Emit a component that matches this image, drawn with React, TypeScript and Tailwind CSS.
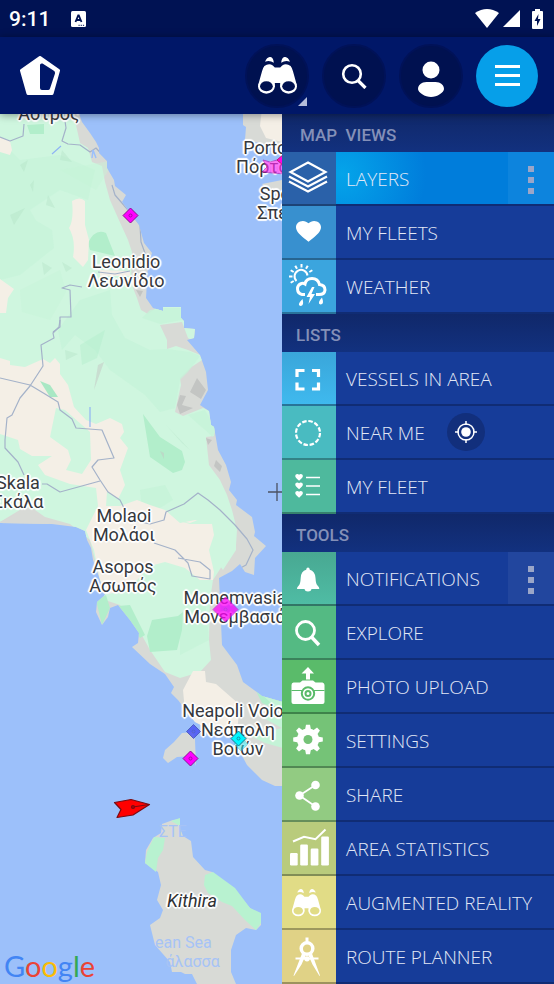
import React from "react";

const HEART =
  "M12 21.35l-1.45-1.32C5.4 15.36 2 12.28 2 8.5 2 5.42 4.42 3 7.5 3c1.74 0 3.41.81 4.5 2.09C13.09 3.81 14.76 3 16.5 3 19.58 3 22 5.42 22 8.5c0 3.78-3.4 6.86-8.55 11.54L12 21.35z";

function Binoculars({ hole }: { hole: string }) {
  return (
    <g fill="#fff">
      <path d="M21 14Q27 -1 37 0Q46 2 47 17Q35 9 21 14ZM95 14Q89 -1 79 0Q70 2 69 17Q81 9 95 14Z" />
      <path d="M19 27Q32 17 44 25L50 31H66L72 25Q84 17 97 27Q101 32 104 42L115 82L112 90H66V77H50V90H3L1 82L12 42Q15 32 19 27Z" />
      <ellipse cx="25" cy="88" rx="25" ry="21" />
      <ellipse cx="91" cy="88" rx="25" ry="21" />
      <ellipse cx="25" cy="87" rx="19" ry="15" fill={hole} />
      <ellipse cx="91" cy="87" rx="19" ry="15" fill={hole} />
    </g>
  );
}

const gearTeeth = [0, 45, 90, 135, 180, 225, 270, 315];
const sunRays = [150, 180, 210, 240, 270, 300, 330];

const glyphs: Record<string, React.ReactNode> = {
  layers: (
    <g fill="none" stroke="#fff" strokeWidth="2.2">
      <path d="M26 10.500L43.500 20L26 29.500L8.500 20Z" />
      <path d="M7 24.500L26 34.500L45 24.500" />
      <path d="M7 29.500L26 39.500L45 29.500" />
    </g>
  ),
  heart: <path d={HEART} fill="#fff" transform="translate(11.500 11.500) scale(1.25 1.14)" />,
  weather: (
    <g fill="none" stroke="#fff" strokeWidth="2">
      <path d="M14.500 21A6.500 6.500 0 1 1 25.500 15.500" />
      {sunRays.map((a) => (
        <path key={a} d="M28.500 16.500H32" transform={`rotate(${a} 19.500 16.500)`} />
      ))}
      <path
        strokeWidth="3"
        d="M23 34.500H20A5.700 5.700 0 0 1 19.500 23.500Q21.500 23 23 24Q24 18.500 30 18.500Q36 18.500 37.500 24.500Q43 25 43 30Q42.500 34.500 37 34.500H34"
      />
      <path
        fill="#fff"
        stroke="none"
        d="M30 27L24.500 37H28L26.500 44L33 34H29.500L32.500 27ZM20.500 39Q22.500 46 18.500 46Q14.500 45 20.500 39ZM40 37.500Q42.500 44.500 38.500 44.500Q34.500 43.500 40 37.500Z"
      />
    </g>
  ),
  brackets: (
    <path
      d="M15 25V18.500H22.500M30 18.500H36.500V25M36.500 30.500V37H30M22.500 37H15V30.500"
      fill="none"
      stroke="#fff"
      strokeWidth="3.200"
    />
  ),
  dashed: <circle cx="26" cy="27" r="12" fill="none" stroke="#fff" strokeWidth="2.200" strokeDasharray="4.500 1.780" />,
  fleetList: (
    <g fill="#fff">
      {[13.5, 22, 30.5].map((y) => (
        <g key={y}>
          <path d={HEART} transform={`translate(12.500 ${y - 0.5}) scale(.38 .36)`} />
          <path d={`M24 ${y + 4}H38`} stroke="#fff" strokeWidth="1.500" />
        </g>
      ))}
    </g>
  ),
  bell: (
    <path
      fill="#fff"
      d="M26 15.500Q27.600 15.500 27.800 17.800Q33 19 33.500 26Q33.800 32 35.500 33.500Q37.500 35 37.300 37H29.500Q29 39.500 26 39.500T22.500 37H15Q14.800 35 16.800 33.500Q18.400 32 18.700 26Q19 19 24.200 17.800Q24.400 15.500 26 15.500Z"
    />
  ),
  search: (
    <g fill="none" stroke="#fff" strokeWidth="2.800">
      <circle cx="23.500" cy="24.500" r="9" />
      <path d="M29.500 31L37 39" strokeWidth="3.500" />
    </g>
  ),
  camera: (
    <g>
      <path
        fill="#fff"
        d="M26 7L32 13.500H28V19.500H24V13.500H19.500ZM11.500 22.500H18L20.500 20.500H31L33.500 22.500H40.500Q42.500 23 42.500 25V42Q42.500 44 40.500 44H11.500Q9.500 44 9.500 42V25Q9.500 22.500 11.500 22.500Z"
      />
      <path d="M9.500 30.500H42.500" stroke="#5abb6a" strokeWidth="1.200" />
      <circle cx="26" cy="33.500" r="6.200" fill="#fff" stroke="#5abb6a" strokeWidth="2" />
      <circle cx="26" cy="33.500" r="2.500" fill="#fff" stroke="#5abb6a" strokeWidth="2" />
    </g>
  ),
  gear: (
    <g>
      <circle cx="26" cy="25.500" r="11" fill="#fff" />
      {gearTeeth.map((a) => (
        <path key={a} d="M23 16L24 10.700H28L29 16Z" fill="#fff" transform={`rotate(${a} 26 25.500)`} />
      ))}
      <circle cx="26" cy="25.500" r="4.500" fill="#75c377" />
    </g>
  ),
  share: (
    <g fill="#fff">
      <path d="M33.500 17L17.500 27.500L33.500 38.500" fill="none" stroke="#fff" strokeWidth="1.800" />
      <circle cx="17.500" cy="27.500" r="4.300" />
      <circle cx="33.500" cy="17" r="4.300" />
      <circle cx="33.500" cy="38.500" r="4.300" />
    </g>
  ),
  stats: (
    <g fill="#fff">
      <rect x="8" y="31" width="7.700" height="12.500" rx="1.200" />
      <rect x="18.200" y="22.500" width="7.700" height="21" rx="1.200" />
      <rect x="28.700" y="26.500" width="7.700" height="17" rx="1.200" />
      <rect x="39.200" y="14.500" width="7.700" height="29" rx="1.200" />
      <path d="M11 19.500L22 14.800L33.500 17.200L43.500 7.500" fill="none" stroke="#fff" strokeWidth="2" />
    </g>
  ),
  binoculars: (
    <g transform="translate(10 13) scale(.25)">
      <Binoculars hole="#e1dc86" />
    </g>
  ),
  compass: (
    <g fill="none" stroke="#fff" transform="translate(0 -1.500)">
      <circle cx="25" cy="20" r="5.800" strokeWidth="3.500" />
      <path d="M25 9V14" strokeWidth="3" />
      <path d="M13.500 30H36.500" strokeWidth="2" />
      <path
        fill="#fff"
        stroke="none"
        d="M20 25L23.500 27L19.500 36L12 47.500L11.500 47ZM30 25L26.500 27L30.500 36L37.500 47.500L38 47ZM22 29Q25 26.500 28 29Q28 33 25 33T22 29Z"
      />
    </g>
  ),
};

type Item = { label: string; icon: string; tint: string; more?: boolean; locate?: boolean; active?: boolean };
type Section = { title: string; pad: string; items: Item[] };

const sections: Section[] = [
  {
    title: "MAP\u00a0 VIEWS",
    pad: "pl-[18px]",
    items: [
      { label: "LAYERS", icon: "layers", tint: "bg-[#2a61a9]", more: true, active: true },
      { label: "MY FLEETS", icon: "heart", tint: "bg-[#3890cf]" },
      { label: "WEATHER", icon: "weather", tint: "bg-[#3ba5de]" },
    ],
  },
  {
    title: "LISTS",
    pad: "pl-[14px]",
    items: [
      { label: "VESSELS IN AREA", icon: "brackets", tint: "bg-linear-to-b from-[#3aa6da] to-[#3fb9ee]" },
      { label: "NEAR ME", icon: "dashed", tint: "bg-[#49bbc1]", locate: true },
      { label: "MY FLEET", icon: "fleetList", tint: "bg-[#4eb99d]" },
    ],
  },
  {
    title: "TOOLS",
    pad: "pl-[14px]",
    items: [
      { label: "NOTIFICATIONS", icon: "bell", tint: "bg-linear-to-b from-[#48a892] to-[#4fbca4]", more: true },
      { label: "EXPLORE", icon: "search", tint: "bg-[#54ba83]" },
      { label: "PHOTO UPLOAD", icon: "camera", tint: "bg-[#5abb6a]" },
      { label: "SETTINGS", icon: "gear", tint: "bg-[#75c377]" },
      { label: "SHARE", icon: "share", tint: "bg-[#92cb82]" },
      { label: "AREA STATISTICS", icon: "stats", tint: "bg-[#b9cb7c]" },
      { label: "AUGMENTED REALITY", icon: "binoculars", tint: "bg-[#e1dc86]" },
      { label: "ROUTE PLANNER", icon: "compass", tint: "bg-[#e0d286]" },
    ],
  },
];

function Row({ item }: { item: Item }) {
  return (
    <li
      className={`flex h-[54px] border-b-2 border-[#102c74] ${
        item.active
          ? "bg-[#007ddb] bg-[radial-gradient(circle_at_60px_22px,#04a4ea_0,#007ddb_84px)]"
          : "bg-[#163c99]"
      }`}
    >
      <button type="button" className="flex min-w-0 items-center text-left">
        <span className={`h-[54px] w-[54px] shrink-0 self-start border-b-2 border-black/30 ${item.tint}`}>
          <svg viewBox="0 0 54 54" className="size-[54px]" aria-hidden="true">
            {glyphs[item.icon]}
          </svg>
        </span>
        <span className="pt-[2px] pl-[10px] font-['Open_Sans',sans-serif] text-[19px] leading-6 font-light whitespace-nowrap text-[#e2e8f6]">
          {item.label}
        </span>
      </button>
      {item.locate && (
        <button
          type="button"
          aria-label="Locate me"
          className="ml-[22px] flex size-[38px] items-center justify-center self-center rounded-full bg-[#122f7c]"
        >
          <svg viewBox="0 0 24 24" className="size-6" fill="none" stroke="#fff" strokeWidth="1.500" aria-hidden="true">
            <circle cx="12" cy="12" r="8" />
            <circle cx="12" cy="12" r="4.800" fill="#fff" stroke="none" />
            <path d="M12 1V5M12 19V23M1 12H5M19 12H23" />
          </svg>
        </button>
      )}
      {item.more && (
        <button
          type="button"
          aria-label={`More options for ${item.label.toLowerCase()}`}
          className="ml-auto flex w-[46px] flex-col items-center justify-center gap-[5px] bg-white/5 pt-1"
        >
          <span className="size-[6px] bg-[#9ba6c8]" />
          <span className="size-[6px] bg-[#9ba6c8]" />
          <span className="size-[6px] bg-[#9ba6c8]" />
        </button>
      )}
    </li>
  );
}

const halo =
  "[text-shadow:2px_0_1px_#fff,-2px_0_1px_#fff,0_2px_1px_#fff,0_-2px_1px_#fff,1px_1px_1px_#fff,-1px_-1px_1px_#fff,1px_-1px_1px_#fff,-1px_1px_1px_#fff]";

const places = [
  { lines: ["Άστρος"], at: "left-[49px] top-[-10px]" },
  { lines: ["Leonidio", "Λεωνίδιο"], at: "left-[126px] top-[138px]" },
  { lines: ["Porto Heli", "Πόρτο Χέλι"], at: "left-[283px] top-[24px]" },
  { lines: ["Spetses", "Σπέτσες"], at: "left-[292px] top-[70px]" },
  { lines: ["Skala", "Σκάλα"], at: "left-[18px] top-[359px]" },
  { lines: ["Molaoi", "Μολάοι"], at: "left-[124px] top-[392px]" },
  { lines: ["Asopos", "Ασωπός"], at: "left-[123px] top-[443px]" },
  { lines: ["Monemvasia", "Μονεμβασιά"], at: "left-[235px] top-[474px]" },
  { lines: ["Neapoli Voion", "Νεάπολη", "Βοιών"], at: "left-[238px] top-[587px]" },
];

function Diamond({ x, y, r, fill, stroke, o = 1 }: { x: number; y: number; r: number; fill: string; stroke: string; o?: number }) {
  return (
    <g transform={`translate(${x} ${y})`} opacity={o}>
      <path d={`M0 ${-r}L${r} 0L0 ${r}L${-r} 0Z`} fill={fill} stroke={stroke} />
      <circle r="1.500" fill="none" stroke={stroke} strokeWidth=".8" />
    </g>
  );
}

function Terrain() {
  return (
    <svg
      viewBox="0 114 282 870"
      preserveAspectRatio="xMinYMin slice"
      className="absolute inset-0 size-full"
      aria-hidden="true"
    >
      <defs>
        <clipPath id="mainland">
          <path d="M0 100H74L82 122L90 133L96 142L99 148V153L107 161V168L114 180L115 186L126 195L122 202L130 213L139 225L144 243L152 253L148 265L146 298L153 308L163 311V307H181V318L184 321V328L195 329L194 338L187 340L200 355L206 372L208 390L200 405L209 411L211 425L214 427L218 450L226 465L231 482L229 490L237 500L236 505L252 517L255 532L254 536L266 546L255 558L254 575L245 572L240 564L232 571L219 578L220 600L222 645L237 665L243 682L262 696L290 704V786L275 786L262 780L247 765L240 752L236 738L218 725L205 727L195 722L178 700L171 693L174 687L165 674L150 664L132 647L138 643L139 633L130 620L118 605L110 608L108 617L102 625L96 612L97 602L105 595L100 580L93 560L91 548L87 540L85 531L76 527L52 524L0 523Z" />
        </clipPath>
      </defs>
      <rect y="100" width="282" height="890" fill="#9cc0fa" />
      <g clipPath="url(#mainland)">
        <rect y="100" width="290" height="700" fill="#d8dad6" />
        <path
          fill="#cff6df"
          d="M0 100H65L76 125L80 143L88 148L92 162L102 166L105 182L110 200L118 218L128 240L132 252L131 283L137 298L141 310L148 314L162 304H200V345L188 338L182 322L160 325L167 340V349L176 346L188 350L200 355L202 360L190 368L180 378L181 385L175 412L183 416L203 408L216 414L214 436L206 437L209 465L220 480L227 495L232 510L237 530L236 545L222 566L213 580L210 600L209 640L211 660L200 672L180 678L165 672L150 650L139 630L120 605L105 600L90 540L70 524L45 517L28 505L0 522Z"
        />
        <path fill="#d8dad6" d="M0 522L14 515L30 513L50 524L0 526Z" />
        <g fill="#c5f4d8">
          <path d="M0 140L20 160L60 155L95 170L88 200L60 190L30 210L50 245L10 250L0 230ZM0 220H35L52 230L54 248L20 275L0 280Z" opacity=".6" />
          <path d="M110 290L112 315L125 338L150 350L167 349L190 352L200 356L188 372L180 380L175 408L160 412L145 395L110 370L95 350L75 335L62 350L58 330L80 300Z" opacity=".7" />
          <path d="M140 490L165 485L173 500L160 508H142ZM142 318L150 310L165 308H182V320L160 324Z" opacity=".8" />
          <path d="M188 415L205 410L216 430L213 437ZM180 620L205 600L209 640L180 655Z" opacity=".8" />
          <path d="M60 170L115 160L96 190ZM20 290L60 270L66 292L50 320L22 312Z" opacity=".4" />
        </g>
        <g fill="#b2eecb">
          <path d="M143 414L160 437L182 451L185 462L182 470L173 473L150 457ZM88 243Q95 228 106 233L115 256L90 250Z" />
          <path d="M152 620L178 616L183 612L182 630L177 650L150 652L147 636ZM27 125L44 124V134H30Z" />
          <path d="M96 600L106 595L110 608L102 625ZM118 606L130 605L145 635L140 638ZM254 687L282 700V712L262 703Z" />
          <path d="M80 345L105 330L97 358L82 365Z" opacity=".45" />
        </g>
        <g fill="#f4efe6">
          <path d="M72 201Q80 196 85 201L85 225L89 240L88 260L83 267L73 257Q76 240 69 228Q74 220 72 201ZM0 137L10 141L12 150L10 155L0 152ZM0 279L14 289L8 298L6 313H0ZM100 270L130 271V276H100Z" />
          <path d="M0 358L10 361V365L25 367L43 359L50 363L55 358L60 364V374L68 385L74 407L86 420L96 424L110 418L122 424L124 432L120 438L128 448L120 470L125 485L118 499L107 492L106 506L120 506L137 500L150 505L165 510L180 523L195 520L212 524L214 535L209 550L214 572L213 580H200L185 568L165 562L150 566L128 590L108 594L100 580L94 550L86 530L98 506L96 488L70 484L45 475L38 465L52 456L32 456L20 449L18 440L0 434Z" />
          <path d="M193 671H205L206 682L216 684L240 705L236 740L200 735L185 712L183 690Z" />
        </g>
        <path
          fill="#cff6df"
          d="M56 408L65 410L90 432L91 460L82 474L66 470L71 460L68 450L50 437ZM176 520L190 523L206 517L212 524L190 524ZM214 545L218 530H236V550L223 570L212 555Z"
        />
        <path fill="#a9e8c4" d="M40 381L50 385L58 397L50 397Z" />
        <path fill="#c4f3d7" d="M255 688L290 700V750L265 743L250 736L282 728L258 715L285 716Z" />
        <g fill="#c3c5c3">
          <path d="M197 378L206 390L201 399L190 392ZM180 395L186 396L182 405L193 408L180 414L177 405ZM206 438L212 440L208 445ZM216 460L222 466L220 472L214 466ZM136 290L143 291L140 297Z" />
          <path d="M98 365L104 362L94 390ZM160 451L164 453V459Z" opacity=".5" />
        </g>
        <g fill="#b0dfc4" opacity=".35">
          <path d="M10 215L25 208L14 225ZM48 195L55 208L46 205ZM42 262L52 268L44 275ZM20 165L28 160L24 172ZM62 150L72 162L60 160ZM166 425L190 450L182 443ZM62 262L72 268L66 272ZM30 185L34 180L33 192ZM65 350L78 354L66 360Z" />
        </g>
        <g fill="none" stroke="#a4b2c9" strokeWidth="1.200" strokeLinejoin="round">
          <path d="M64 114L66 128L62 141L68 144L80 145L90 152L96 148L107 160M0 137L10 141L23 136L24 124M82 287L70 285L62 288L70 290L71 317H60V327L53 332M146 256L141 242L140 225L128 210L115 195L112 185M98 272L115 274L130 271" />
          <path d="M60 320L59 327L53 333L54 338L41 345L43 366L30 386L20 398L12 415L7 418L5 440V448L18 462L24 475M0 378L30 385L45 394L58 402L60 410L72 419L76 428L102 430L114 458L98 460L92 467L100 480L108 492L120 500L130 520L150 524L164 520L166 512L184 504L198 493L208 500L220 510L235 525L247 539L253 550L246 565L222 578M100 481L60 492L47 484H42M154 543L175 550L188 563L192 576L210 579V570L200 562L178 558" />
        </g>
        <path d="M52 154L61 146M90 407V427" stroke="#8fb4f4" strokeWidth="1.200" />
        <path d="M92 158L93 150L96 158" fill="none" stroke="#9cc0fa" strokeWidth="1.500" />
      </g>
      <path fill="#d8dad6" d="M243 100V125L246 127L245 140L260 143L282 150V100ZM282 180L262 184L270 192L282 190Z" />
      <path fill="#f4efe6" d="M263 100L260 126L266 138L282 142V100Z" />
      <path fill="#d8dad6" d="M193 732L182 733L174 742L165 750L163 758L168 763L177 757L193 756L196 766L195 740Z" />
      <path
        fill="#d8dad6"
        d="M162 824L173 820L180 819V828L183 836L191 841L193 857L205 870L212 872L235 890L250 908L261 915V925L256 930L246 928L236 935L231 950V972L236 984H197L192 974H185L181 972H172L170 962L155 945L150 925L160 918L163 910L157 900L161 885L158 872L145 863L146 850L153 838L161 833Z"
      />
      <path
        fill="#b8f2d0"
        d="M154 837L165 838L163 850L158 858L156 872L145 863L147 852ZM205 875L213 872L235 888L250 908L261 913V923L256 930L245 920L232 906L222 902L208 893L204 885ZM171 821L180 818V826Z"
      />
    </svg>
  );
}

function Markers() {
  return (
    <svg
      viewBox="0 114 282 870"
      preserveAspectRatio="xMinYMin slice"
      className="pointer-events-none absolute inset-0 size-full"
      aria-hidden="true"
    >
      <Diamond x={130.5} y={215.5} r={7.5} fill="#ff00ff" stroke="#8a1290" />
      <path d="M263 160L270 162L284 158V174L262 172L267 167Z" fill="#ff2cf2" stroke="#b010b0" opacity=".65" />
      <path d="M277 160L284 154V166Z" fill="#ff00e6" stroke="#c2226c" />
      <Diamond x={225.5} y={609.5} r={12.5} fill="#ff00f7" stroke="#c21cd0" o={0.75} />
      <Diamond x={193.5} y={731.5} r={7} fill="#4a55f4" stroke="#4450b8" o={0.85} />
      <Diamond x={241} y={744} r={7} fill="#28e7f3" stroke="#43b9d0" o={0.5} />
      <Diamond x={238.5} y={738.5} r={7.5} fill="#00f6ff" stroke="#147f91" />
      <Diamond x={190.5} y={758.5} r={7.5} fill="#ff00ff" stroke="#8a1290" />
      <g stroke="#7a0b12" strokeWidth="1.200" strokeLinejoin="round">
        <path d="M114.500 802.500L131 799.500L149.500 804.500L133 815L117 817.500L121 809.500Z" fill="#ff0000" />
        <path d="M133 807L149 804.500" />
        <circle cx="133" cy="807" r="1.500" fill="#b0000a" />
      </g>
      <path d="M268 492H282M277 483V501" stroke="#4b5263" strokeWidth="1.300" />
    </svg>
  );
}

const roundButton = "flex size-16 items-center justify-center rounded-full border-2 border-[#001258] bg-[#001150]";

export default function App() {
  return (
    <div className="flex min-h-screen flex-col bg-[#001768] font-[Roboto,sans-serif]">
      <div className="flex h-[37px] items-center bg-[#001253] pr-[11px] pl-[9px] text-white">
        <span className="text-[21px] leading-6 font-medium">9:11</span>
        <svg viewBox="0 0 15 16" className="ml-[21px] h-4 w-[15px]" aria-hidden="true">
          <rect width="15" height="16" rx="1.500" fill="#fff" />
          <path d="M4.500 11L7.200 4.500H7.800L10.500 11M5.500 9H9.500" fill="none" stroke="#001253" strokeWidth="1.800" />
          <path d="M7.500 14.300H14" stroke="#001253" strokeWidth="1" strokeDasharray="1.200 1" />
        </svg>
        <svg viewBox="0 0 24 19" className="ml-auto h-[19px] w-6" aria-hidden="true">
          <path d="M0 4Q12 -4 24 4L12 19Z" fill="#fff" />
        </svg>
        <svg viewBox="0 0 17 17" className="ml-1 size-[17px]" aria-hidden="true">
          <path d="M17 0V17H0Z" fill="#fff" />
        </svg>
        <svg viewBox="0 0 11 20" className="ml-3 h-5 w-[11px]" aria-hidden="true">
          <path d="M3 0H8V2H10Q11 2 11 3V19Q11 20 10 20H1Q0 20 0 19V3Q0 2 1 2H3Z" fill="#fff" />
          <path d="M6.500 5L2.500 12H5V17L8.500 10H6Z" fill="#001253" />
        </svg>
      </div>

      <header className="relative z-10 flex h-[77px] items-center gap-[13px] bg-[#001768] pr-4 pl-5 shadow-[0_1px_8px_rgba(0,0,0,0.4)]">
        <a href="#home" aria-label="Home" className="mr-auto">
          <svg viewBox="0 0 40 39" className="h-[39px] w-10" aria-hidden="true">
            <path
              d="M20 1.500L38.500 14.500L32 37.500H8L1.500 14.500Z"
              fill="#fff"
              stroke="#fff"
              strokeWidth="3"
              strokeLinejoin="round"
            />
            <path
              d="M20 9Q20 7 22.500 7.500L33.500 14.500Q35.500 15.500 35 17.500L30 32.500Q29.500 34 28 34H22Q20 34 20 32Z"
              fill="#001768"
            />
          </svg>
        </a>
        <button type="button" aria-label="Augmented view" className={`relative ${roundButton}`}>
          <svg viewBox="0 0 116 110" className="h-[37px] w-[39px]" aria-hidden="true">
            <Binoculars hole="#001150" />
          </svg>
          <svg viewBox="0 0 9 9" className="absolute right-0 bottom-0 size-[9px]" aria-hidden="true">
            <path d="M9 0V9H0Z" fill="#b4bcda" />
          </svg>
        </button>
        <button type="button" aria-label="Search" className={roundButton}>
          <svg viewBox="0 0 26 26" className="size-[26px]" fill="none" stroke="#fff" strokeWidth="2.600" aria-hidden="true">
            <circle cx="11" cy="11" r="8.800" />
            <path d="M17 17.500L24.500 25" strokeWidth="3.200" />
          </svg>
        </button>
        <button type="button" aria-label="Account" className={roundButton}>
          <svg viewBox="0 0 28 42" className="h-[42px] w-7" fill="#fff" aria-hidden="true">
            <circle cx="14" cy="15" r="8.500" />
            <path d="M14 27C18 27 19.500 26.500 22 27.500C25.500 29 27 31 27 34C27 37.500 20 42 14 42S1 37.500 1 34C1 31 2.500 29 6 27.500C8.500 26.500 10 27 14 27Z" />
          </svg>
        </button>
        <button
          type="button"
          aria-label="Menu"
          className="flex size-[62px] flex-col items-center justify-center gap-[6px] rounded-full bg-[#069fe9]"
        >
          <span className="h-[3px] w-[25px] bg-white" />
          <span className="h-[3px] w-[25px] bg-white" />
          <span className="h-[3px] w-[25px] bg-white" />
        </button>
      </header>

      <div className="flex flex-1">
        <main className="relative min-w-0 flex-1 overflow-hidden bg-[#9cc0fa]">
          <Terrain />
          {places.map((p) => (
            <div
              key={p.lines[0]}
              className={`absolute ${p.at} flex -translate-x-1/2 flex-col items-center text-lg leading-[19px] whitespace-nowrap text-[#35383d] ${halo}`}
            >
              {p.lines.map((l) => (
                <span key={l}>{l}</span>
              ))}
            </div>
          ))}
          <span
            className={`absolute top-[777px] left-[192px] -translate-x-1/2 text-lg leading-5 text-[#2e3033] italic ${halo}`}
          >
            Kithira
          </span>
          <span className="absolute top-[708px] left-[159px] text-base leading-[19px] text-[#a6c3f6]">ΣΤΕ</span>
          <div className="absolute top-[819px] left-[155px] flex flex-col items-end text-base leading-[19px] text-[#a6c3f6]">
            <span className="pr-2">ean Sea</span>
            <span>άλασσα</span>
          </div>
          <Markers />
          <div className="absolute bottom-0 left-1 font-[Lato,sans-serif] text-[29px] leading-9" aria-label="Google">
            <span className="text-[#4285f4]">G</span>
            <span className="text-[#ea4335]">o</span>
            <span className="text-[#fbbc05]">o</span>
            <span className="text-[#4285f4]">g</span>
            <span className="text-[#34a853]">l</span>
            <span className="text-[#ea4335]">e</span>
          </div>
        </main>

        <nav className="w-[272px] shrink-0 bg-[#163c99]" aria-label="Main menu">
          {sections.map((s) => (
            <section key={s.title}>
              <h2
                className={`flex h-[38px] items-center bg-linear-to-b from-[#10286a] to-[#12317f] pt-1 text-[17px] leading-5 font-medium text-[#8490b8] ${s.pad}`}
              >
                {s.title}
              </h2>
              <ul>
                {s.items.map((i) => (
                  <Row key={i.label} item={i} />
                ))}
              </ul>
            </section>
          ))}
        </nav>
      </div>
    </div>
  );
}
